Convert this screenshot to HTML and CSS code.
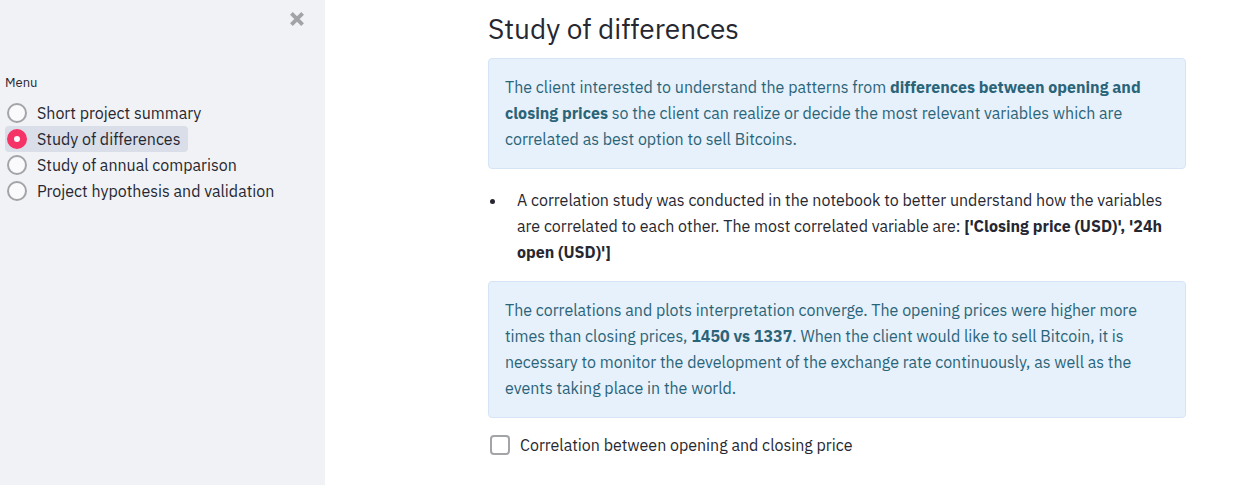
FILE: index.html
```html
<!DOCTYPE html>
<html lang="en">
<head>
<meta charset="utf-8">
<meta name="viewport" content="width=device-width, initial-scale=1">
<title>Study of differences</title>
<link rel="stylesheet" href="styles.css">
</head>
<body>
<div class="app">
  <aside class="sidebar">
    <div class="sidebar-top">
      <button class="close" type="button" aria-label="Close sidebar">
        <svg viewBox="0 0 16 16" width="16" height="16" aria-hidden="true"><path d="M2.4 2.4L13.6 13.6M13.6 2.4L2.4 13.6"/></svg>
      </button>
    </div>
    <fieldset class="menu">
      <legend class="menu-title">Menu</legend>
      <label class="option"><input type="radio" name="menu"><span>Short project summary</span></label>
      <label class="option"><input type="radio" name="menu" checked><span>Study of differences</span></label>
      <label class="option"><input type="radio" name="menu"><span>Study of annual comparison</span></label>
      <label class="option"><input type="radio" name="menu"><span>Project hypothesis and validation</span></label>
    </fieldset>
  </aside>
  <main class="main">
    <h1 class="title">Study of differences</h1>
    <p class="info">The client interested to understand the patterns from <strong>differences between opening and closing prices</strong> so the client can realize or decide the most relevant variables which are correlated as best option to sell Bitcoins.</p>
    <ul class="notes">
      <li>A correlation study was conducted in the notebook to better understand how the variables are correlated to each other. The most correlated variable are: <strong>['Closing price (USD)', '24h open (USD)']</strong></li>
    </ul>
    <p class="info">The correlations and plots interpretation converge. The opening prices were higher more times than closing prices, <strong>1450 vs 1337</strong>. When the client would like to sell Bitcoin, it is necessary to monitor the development of the exchange rate continuously, as well as the events taking place in the world.</p>
    <label class="check"><input type="checkbox"><span>Correlation between opening and closing price</span></label>
  </main>
</div>
</body>
</html>
```
FILE: styles.css
```css
* {
  box-sizing: border-box;
}

body {
  margin: 0;
  background: #fff;
  color: #262730;
  font-family: "IBM Plex Sans", Roboto, sans-serif;
  font-size: 16px;
  line-height: 26px;
}

.app {
  display: flex;
  min-height: 100vh;
}

.sidebar {
  flex: 0 0 325px;
  padding: 8px 20px 16px 5px;
  background: #f0f2f6;
}

.sidebar-top {
  display: flex;
  justify-content: flex-end;
  height: 64px;
}

.close {
  display: flex;
  align-items: center;
  justify-content: center;
  width: 16px;
  height: 22px;
  padding: 0;
  border: 0;
  background: none;
  cursor: pointer;
}

.close svg {
  fill: none;
  stroke: #a2a3a7;
  stroke-width: 3.8;
}

.menu {
  display: flex;
  flex-direction: column;
  align-items: flex-start;
  margin: 0;
  padding: 0;
  border: 0;
}

.menu-title {
  margin-bottom: 7px;
  padding: 0;
  font-size: 13px;
  line-height: 21px;
}

.option {
  display: flex;
  align-items: center;
  gap: 10px;
  padding: 0 8px 0 2px;
  border-radius: 4px;
  cursor: pointer;
}

.option:has(input:checked) {
  background: #d9dee9;
}

.option input {
  appearance: none;
  flex: none;
  width: 20px;
  height: 20px;
  margin: 0;
  border: 2px solid #a3a4a8;
  border-radius: 50%;
  background: #fafafc;
}

.option input:checked {
  border: 7px solid #f63366;
}

.main {
  flex: 1;
  min-width: 0;
  padding: 12px 51px 12px 163px;
}

.title {
  margin: 0 0 12px;
  font-size: 28px;
  font-weight: 400;
  line-height: 34px;
}

.info {
  margin: 0;
  padding: 15px 16px 16px;
  border: 1px solid #d5e5f5;
  border-radius: 4px;
  background: #e7f1fc;
  color: #2a6478;
}

.notes {
  margin: 18px 0 16px;
  padding-left: 19px;
}

.notes li {
  padding-left: 10px;
}

.check {
  display: flex;
  align-items: center;
  gap: 10px;
  margin-top: 14px;
  padding-left: 2px;
}

.check input {
  appearance: none;
  flex: none;
  width: 20px;
  height: 20px;
  margin: 0;
  border: 2px solid #a3a4a8;
  border-radius: 4px;
  background: #fff;
}
```
